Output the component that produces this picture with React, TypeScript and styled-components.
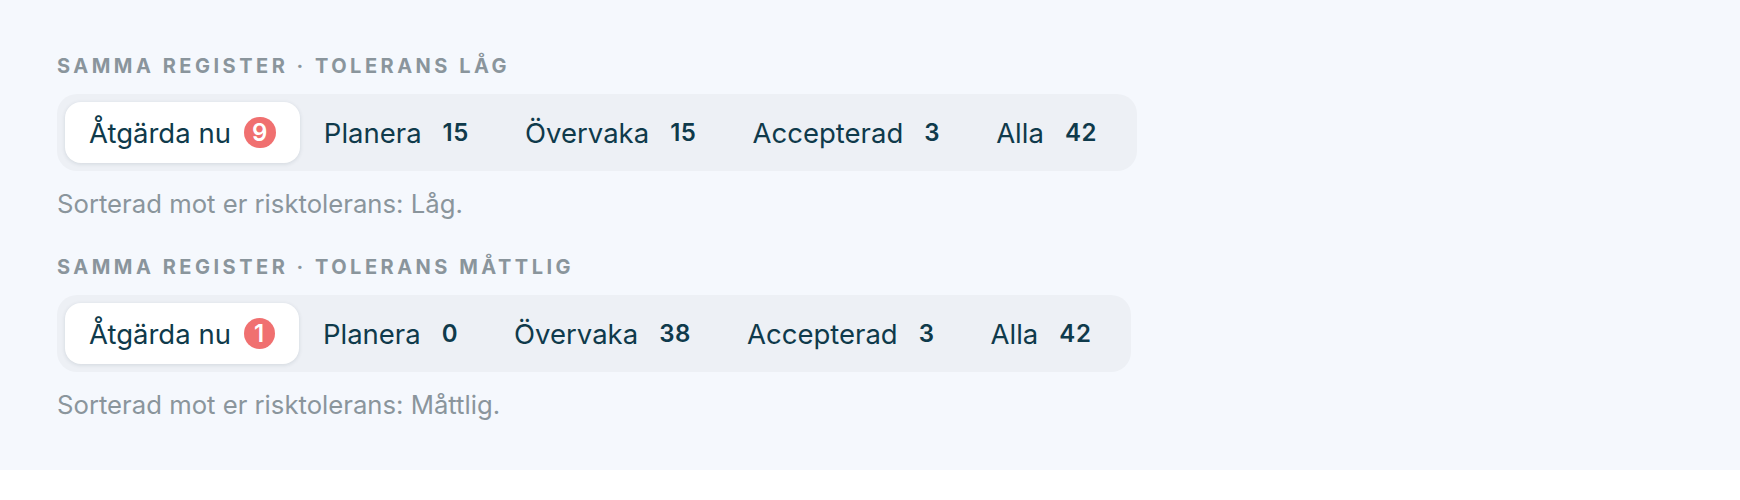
import React from 'react'
import styled, { createGlobalStyle } from 'styled-components'

type TabItem = {
  label: string
  count: number
}

type Group = {
  tolerance: string
  tabs: TabItem[]
}

const groups: Group[] = [
  {
    tolerance: 'Låg',
    tabs: [
      { label: 'Åtgärda nu', count: 9 },
      { label: 'Planera', count: 15 },
      { label: 'Övervaka', count: 15 },
      { label: 'Accepterad', count: 3 },
      { label: 'Alla', count: 42 }
    ]
  },
  {
    tolerance: 'Måttlig',
    tabs: [
      { label: 'Åtgärda nu', count: 1 },
      { label: 'Planera', count: 0 },
      { label: 'Övervaka', count: 38 },
      { label: 'Accepterad', count: 3 },
      { label: 'Alla', count: 42 }
    ]
  }
]

const App = (): JSX.Element => {
  return (
    <React.Fragment>
      <GlobalStyle />
      <Panel>
        {groups.map((group) => (
          <Block key={group.tolerance}>
            <Heading>Samma register · tolerans {group.tolerance}</Heading>
            <TabBar>
              {group.tabs.map((tab, i) => (
                <Tab key={tab.label} $active={i === 0}>
                  <Label>{tab.label}</Label>
                  <Count $alert={i === 0}>{tab.count}</Count>
                </Tab>
              ))}
            </TabBar>
            <Note>Sorterad mot er risktolerans: {group.tolerance}.</Note>
          </Block>
        ))}
      </Panel>
    </React.Fragment>
  )
}

const GlobalStyle = createGlobalStyle`
  body {
    margin: 0;
    background: #ffffff;
    font-family: Inter, 'Noto Sans', sans-serif;
  }
`

const Panel = styled.section`
  display: flex;
  flex-direction: column;
  gap: 36px;
  padding: 54px 57px 50px;
  background: #f5f8fd;
`

const Block = styled.div`
  display: flex;
  flex-direction: column;
  align-items: flex-start;
`

const Heading = styled.div`
  font-size: 20px;
  line-height: 24px;
  font-weight: 700;
  letter-spacing: 3.5px;
  text-transform: uppercase;
  color: #8a959c;
  margin-bottom: 16px;
`

const TabBar = styled.div`
  display: flex;
  align-items: center;
  padding: 8px;
  background: #edf0f5;
  border-radius: 20px;
`

const Tab = styled.div<{ $active?: boolean }>`
  display: flex;
  align-items: center;
  gap: 13px;
  height: 61px;
  padding: 0 24px;
  border-radius: 16px;
  color: #0f3a4b;
  background: ${(p) => (p.$active ? '#ffffff' : 'transparent')};
  box-shadow: ${(p) =>
    p.$active ? '0 1px 4px rgba(20, 40, 60, 0.12)' : 'none'};
`

const Label = styled.span`
  font-size: 27.5px;
  line-height: 32px;
`

const Count = styled.span<{ $alert?: boolean }>`
  display: inline-flex;
  align-items: center;
  justify-content: center;
  min-width: 31px;
  height: 31px;
  padding: 0 8px;
  box-sizing: border-box;
  border-radius: 16px;
  font-size: 24px;
  font-weight: 600;
  letter-spacing: 0.6px;
  color: ${(p) => (p.$alert ? '#ffffff' : '#0f3a4b')};
  background: ${(p) => (p.$alert ? '#f07070' : 'transparent')};
`

const Note = styled.div`
  margin-top: 18px;
  font-size: 25.7px;
  line-height: 30px;
  color: #8a959c;
`

export default App
